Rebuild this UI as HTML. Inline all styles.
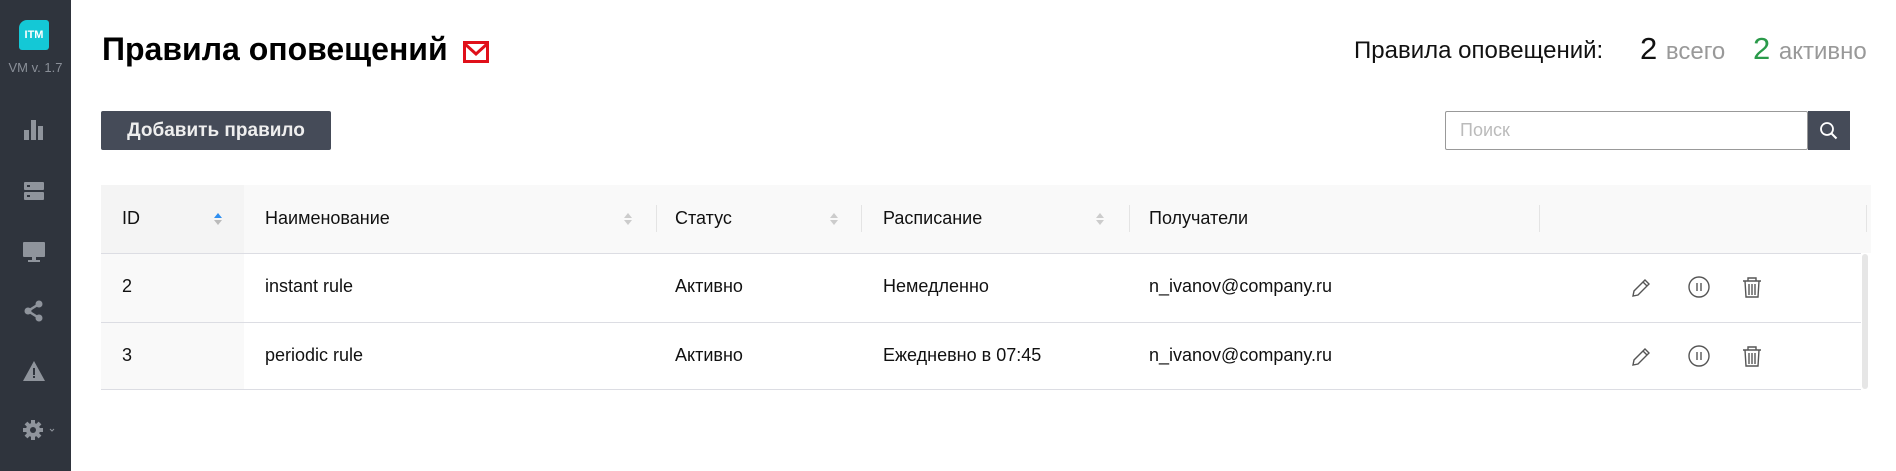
<!DOCTYPE html>
<html><head><meta charset="utf-8"><style>
*{margin:0;padding:0;box-sizing:border-box}
body{width:1896px;height:471px;background:#fff;font-family:"Liberation Sans",sans-serif;color:#111;position:relative;overflow:hidden}
.side{position:absolute;left:0;top:0;width:71px;height:471px;background:#2f343d}
.logo{position:absolute;left:19px;top:20px;width:30px;height:30px;background:#14c8d6;border-radius:8px 3px 3px 3px;color:#fff;font-weight:bold;font-size:11px;text-align:center;line-height:30px}
.ver{position:absolute;left:0;width:71px;top:60px;text-align:center;color:#8a8f98;font-size:13px}
.ic{position:absolute;left:22px;fill:#8f949c}
.abs{position:absolute;white-space:nowrap}
.btn{left:101px;top:111px;width:230px;height:39px;background:#454b58;border-radius:2px;color:#eee;font-weight:bold;font-size:19px;line-height:39px;text-align:center}
.srch{left:1445px;top:111px;width:363px;height:39px;border:1px solid #999;border-radius:2px;color:#bbb;font-size:18px;line-height:37px;padding-left:14px}
.sbtn{left:1808px;top:111px;width:42px;height:39px;background:#454b58}
.hdr{left:101px;top:185px;width:1770px;height:68px;background:#f9f9f9}
.idc{left:101px;top:185px;width:143px;height:204px;background:#f4f4f4}
.idc2{left:101px;top:253px;width:143px;height:136px;background:#f9f9f9}
.t{position:absolute;font-size:18px;white-space:nowrap}
.line{position:absolute;left:101px;width:1760px;height:1px;background:#dcdde3}
.sep{position:absolute;top:205px;width:1px;height:27px;background:#e4e4e4}
.arr{position:absolute;top:211px;width:8px;height:16px}
</style></head><body>
<div class="side">
<div class="logo">ITM</div>
<div class="ver">VM v. 1.7</div>
<svg class="ic" style="top:118px" width="24" height="24" viewBox="0 0 24 24"><rect x="2" y="12" width="5" height="10"/><rect x="9" y="2" width="5" height="20"/><rect x="16" y="8" width="5" height="14"/></svg>
<svg class="ic" style="top:180px" width="24" height="22" viewBox="0 0 24 22"><rect x="2" y="2" width="20" height="8" rx="1"/><rect x="2" y="12" width="20" height="8" rx="1"/><rect x="5" y="5" width="3" height="2" fill="#2f343d"/><rect x="5" y="15" width="3" height="2" fill="#2f343d"/></svg>
<svg class="ic" style="top:240px" width="24" height="24" viewBox="0 0 24 24"><rect x="1" y="2" width="22" height="15" rx="1"/><rect x="10" y="17" width="4" height="4"/><rect x="6" y="20" width="12" height="2"/></svg>
<svg class="ic" style="top:299px" width="24" height="24" viewBox="0 0 24 24"><circle cx="17" cy="5" r="3.5"/><circle cx="6" cy="12" r="3.5"/><circle cx="17" cy="19" r="3.5"/><path d="M17 5L6 12L17 19" stroke="#8f949c" stroke-width="2.5" fill="none"/></svg>
<svg class="ic" style="top:360px" width="24" height="22" viewBox="0 0 24 22"><path d="M12 1L23 21H1Z"/><rect x="11" y="8" width="2" height="7" fill="#2f343d"/><rect x="11" y="16" width="2" height="2" fill="#2f343d"/></svg>
<svg class="ic" style="top:418px" width="34" height="24" viewBox="0 0 34 24"><circle cx="11" cy="12" r="7"/><g stroke="#8f949c" stroke-width="4"><path d="M11 2v20M1 12h20M4 5l14 14M18 5L4 19"/></g><circle cx="11" cy="12" r="3" fill="#2f343d"/><path d="M28 11l2 2 2-2" stroke="#8f949c" fill="none"/></svg>
</div>

<div class="abs" style="left:102px;top:31px;font-size:32px;font-weight:bold;color:#000">Правила оповещений</div>
<svg class="abs" style="left:463px;top:41px" width="26" height="22" viewBox="0 0 26 22"><rect x="1.5" y="1.5" width="23" height="19" fill="none" stroke="#e0101a" stroke-width="3"/><path d="M2 3l11 10 11-10" fill="none" stroke="#e0101a" stroke-width="3"/></svg>

<div class="abs" style="left:1354px;top:37px;font-size:24px;color:#111">Правила оповещений:</div>
<div class="abs" style="left:1640px;top:31px;font-size:31px;color:#111">2 <span style="font-size:24px;color:#999">всего</span></div>
<div class="abs" style="left:1753px;top:31px;font-size:31px;color:#2a9a4a">2 <span style="font-size:24px;color:#999">активно</span></div>

<div class="abs btn">Добавить правило</div>
<div class="abs srch">Поиск</div>
<div class="abs sbtn"><svg width="42" height="39" viewBox="0 0 42 39"><circle cx="19" cy="18" r="6" fill="none" stroke="#fff" stroke-width="1.8"/><path d="M23.5 22.5l5 5" stroke="#fff" stroke-width="2"/></svg></div>

<div class="abs hdr"></div>
<div class="abs idc"></div>
<div class="abs idc2"></div>
<div class="line" style="top:253px"></div>
<div class="line" style="top:322px"></div>
<div class="line" style="top:389px"></div>
<div class="abs" style="left:1862px;top:254px;width:6px;height:135px;background:#e6e6e6;border-radius:3px"></div>

<div class="sep" style="left:656px"></div><div class="sep" style="left:861px"></div><div class="sep" style="left:1129px"></div><div class="sep" style="left:1539px"></div><div class="sep" style="left:1866px"></div>
<svg class="arr" style="left:214px" viewBox="0 0 8 16"><path d="M0 7L4 2L8 7Z" fill="#2f8ff0"/><path d="M0 9L4 14L8 9Z" fill="#bbb"/></svg>
<svg class="arr" style="left:624px" viewBox="0 0 8 16"><path d="M0 7L4 2L8 7Z" fill="#ccc"/><path d="M0 9L4 14L8 9Z" fill="#ccc"/></svg>
<svg class="arr" style="left:830px" viewBox="0 0 8 16"><path d="M0 7L4 2L8 7Z" fill="#ccc"/><path d="M0 9L4 14L8 9Z" fill="#ccc"/></svg>
<svg class="arr" style="left:1096px" viewBox="0 0 8 16"><path d="M0 7L4 2L8 7Z" fill="#ccc"/><path d="M0 9L4 14L8 9Z" fill="#ccc"/></svg>

<div class="t" style="left:122px;top:208px">ID</div>
<div class="t" style="left:265px;top:208px">Наименование</div>
<div class="t" style="left:675px;top:208px">Статус</div>
<div class="t" style="left:883px;top:208px">Расписание</div>
<div class="t" style="left:1149px;top:208px">Получатели</div>

<div class="t" style="left:122px;top:276px">2</div>
<div class="t" style="left:265px;top:276px">instant rule</div>
<div class="t" style="left:675px;top:276px">Активно</div>
<div class="t" style="left:883px;top:276px">Немедленно</div>
<div class="t" style="left:1149px;top:276px">n_ivanov@company.ru</div>

<div class="t" style="left:122px;top:345px">3</div>
<div class="t" style="left:265px;top:345px">periodic rule</div>
<div class="t" style="left:675px;top:345px">Активно</div>
<div class="t" style="left:883px;top:345px">Ежедневно в 07:45</div>
<div class="t" style="left:1149px;top:345px">n_ivanov@company.ru</div>

<svg class="abs" style="left:1630px;top:275px" width="134" height="24" viewBox="0 0 134 24"><g fill="none" stroke="#555" stroke-width="1.4"><path d="M3 21l1-5L15 5l4 4L8 20z M13 7l4 4"/><circle cx="69" cy="12" r="10"/><path d="M67 8v8M71 8v8"/><path d="M113 6h18M118 6V3h8v3M115 6l1 16h12l1-16M119 9v11M122 9v11M125 9v11"/></g></svg>
<svg class="abs" style="left:1630px;top:344px" width="134" height="24" viewBox="0 0 134 24"><g fill="none" stroke="#555" stroke-width="1.4"><path d="M3 21l1-5L15 5l4 4L8 20z M13 7l4 4"/><circle cx="69" cy="12" r="10"/><path d="M67 8v8M71 8v8"/><path d="M113 6h18M118 6V3h8v3M115 6l1 16h12l1-16M119 9v11M122 9v11M125 9v11"/></g></svg>
</body></html>
